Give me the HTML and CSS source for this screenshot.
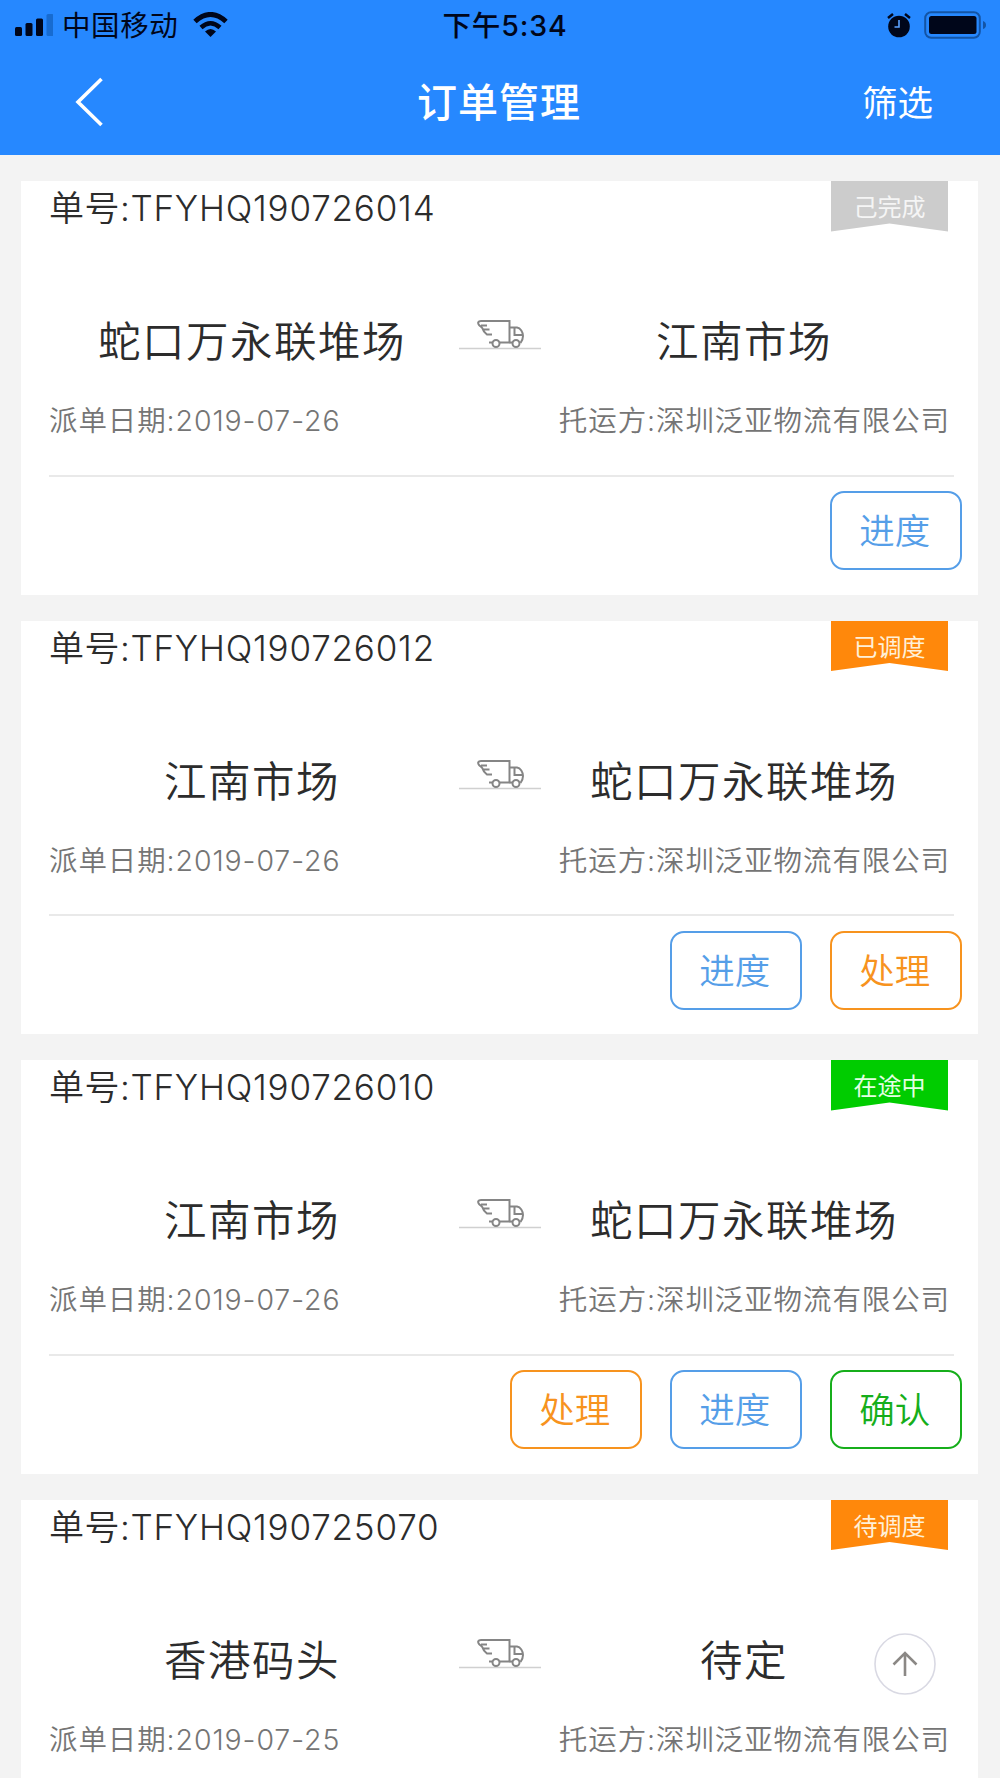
FILE: index.html
```html
<!DOCTYPE html>
<html lang="zh-CN">
<head>
<meta charset="utf-8">
<title>订单管理</title>
<link rel="stylesheet" href="styles.css">
</head>
<body>
<svg class="sprite" width="0" height="0">
  <symbol id="truck" viewBox="0 0 82 34">
    <path d="M0 31.500H82" stroke="#d0d0d0" stroke-width="1.400"/>
    <g fill="none" stroke="#858585" stroke-width="2">
      <path d="M41 25.500H50.500V4H22C19 4 18.500 6 20 8C22 10 23.500 10.500 24 12.500C24.500 15 26 16 28 17.500H33M33 25.500H30M22 8.500H28M24 12.500H30.500"/>
      <path d="M50.500 10.500H58C61.500 11 64 15 64 19C64 22 63 24 61.500 26M53.500 25.500H50.500M55.500 11V18H63"/>
      <circle cx="37" cy="26.500" r="3.500"/><circle cx="57" cy="26.500" r="3.500"/>
    </g>
  </symbol>
</svg>
<header class="header">
  <div class="status">
    <svg class="signal" width="38" height="24" viewBox="0 0 38 24"><rect y="14" width="7" height="9" rx="1.500"/><rect x="10.500" y="10" width="7" height="13" rx="1.500"/><rect x="21" y="5.500" width="7" height="17.500" rx="1.500"/><rect x="31.500" y="1" width="7" height="22" rx="1.500" fill="#176bd0"/></svg>
    <span class="carrier">中国移动</span>
    <svg class="wifi" width="36" height="26" viewBox="0 0 36 26" fill="none" stroke="#00061a"><path d="M2 9.500Q17.500-4.500 33 9.500" stroke-width="5"/><path d="M8 15.500Q17.500 7 27 15.500" stroke-width="4.500"/><path d="M12 19.500Q17.500 14.500 23 19.500L17.500 25Z" fill="#00061a" stroke="none"/></svg>
    <span class="time">下午5:34</span>
    <svg class="alarm" width="24" height="25" viewBox="0 0 24 25"><circle cx="12" cy="13.500" r="10.800"/><path d="M1 5L6 1M23 5L18 1" stroke="#00061a" stroke-width="2.500"/><path d="M12 7V14H7.500" fill="none" stroke="#5ba2ff" stroke-width="1.600"/></svg>
    <svg class="battery" width="64" height="28" viewBox="0 0 64 28"><rect x="1.200" y="1.200" width="54.600" height="25.600" rx="6" fill="none" stroke="#1354a5" stroke-width="2"/><rect x="5" y="5" width="47.500" height="18" rx="2.500"/><path d="M59 10Q62 11 62 14T59 18Z" fill="#1354a5"/></svg>
  </div>
  <nav class="nav">
    <svg class="back" width="30" height="50" viewBox="0 0 30 50"><path d="M26.500 2L3 25L26.500 48" fill="none" stroke="#fff" stroke-width="3.600"/></svg>
    <h1 class="title">订单管理</h1>
    <span class="filter">筛选</span>
  </nav>
</header>
<main class="orders">
  <article class="card">
    <div class="top"><span class="number">单号:<span class="code">TFYHQ190726014</span></span><span class="badge done">己完成</span></div>
    <div class="route"><span>蛇口万永联堆场</span><svg class="truck"><use href="#truck"/></svg><span>江南市场</span></div>
    <div class="meta"><span>派单日期:2019-07-26</span><span>托运方:深圳泛亚物流有限公司</span></div>
    <div class="actions"><span class="btn blue">进度</span></div>
  </article>
  <article class="card">
    <div class="top"><span class="number">单号:<span class="code">TFYHQ190726012</span></span><span class="badge orange-bg">已调度</span></div>
    <div class="route"><span>江南市场</span><svg class="truck"><use href="#truck"/></svg><span>蛇口万永联堆场</span></div>
    <div class="meta"><span>派单日期:2019-07-26</span><span>托运方:深圳泛亚物流有限公司</span></div>
    <div class="actions"><span class="btn blue">进度</span><span class="btn orange">处理</span></div>
  </article>
  <article class="card">
    <div class="top"><span class="number">单号:<span class="code">TFYHQ190726010</span></span><span class="badge green-bg">在途中</span></div>
    <div class="route"><span>江南市场</span><svg class="truck"><use href="#truck"/></svg><span>蛇口万永联堆场</span></div>
    <div class="meta"><span>派单日期:2019-07-26</span><span>托运方:深圳泛亚物流有限公司</span></div>
    <div class="actions"><span class="btn orange">处理</span><span class="btn blue">进度</span><span class="btn green">确认</span></div>
  </article>
  <article class="card">
    <div class="top"><span class="number">单号:<span class="code">TFYHQ190725070</span></span><span class="badge orange-bg">待调度</span></div>
    <div class="route"><span>香港码头</span><svg class="truck"><use href="#truck"/></svg><span>待定</span></div>
    <div class="meta"><span>派单日期:2019-07-25</span><span>托运方:深圳泛亚物流有限公司</span></div>
  </article>
</main>
<svg class="to-top" viewBox="0 0 62 62"><circle cx="31" cy="31" r="30" fill="#fff" stroke="#d9d9e3" stroke-width="1.600"/><path d="M31 43V20M19.500 31.500L31 20L42.500 31.500" fill="none" stroke="#8b8885" stroke-width="2.600"/></svg>
</body>
</html>
```
FILE: styles.css
```css
* { box-sizing: border-box; }
body {
  margin: 0;
  width: 1000px;
  background: #f3f3f3;
  color: #2c2c2c;
  font-family: Inter, "Noto Sans CJK SC", sans-serif;
  font-weight: 350;
  white-space: nowrap;
}
.sprite { position: absolute; }
.header { height: 155px; background: #2688ff; }
.status {
  display: flex;
  align-items: center;
  height: 50px;
  padding: 0 12px 0 15px;
  color: #00061a;
  fill: #00061a;
  font-size: 28.500px;
}
.carrier, .time { line-height: 40px; padding-top: 2px; }
.carrier { margin-left: 9px; letter-spacing: 0.6px; font-weight: 400; }
.wifi { margin-left: 15px; }
.time { margin-left: 213px; font-weight: 500; letter-spacing: 0.9px; }
.alarm { margin-left: auto; }
.battery { margin-left: 13px; }
.nav {
  display: grid;
  grid-template-columns: 1fr 200px 1fr;
  align-items: center;
  height: 104px;
  padding: 0 67px 0 75px;
  color: #fff;
}
.title {
  margin: 0;
  padding: 0 10px 4px 0;
  font-size: 40px;
  font-weight: 500;
  letter-spacing: 1px;
  text-align: center;
}
.filter { justify-self: end; padding-bottom: 4px; font-size: 35.500px; font-weight: 400; }
.orders {
  height: 1623px;
  overflow: hidden;
  padding: 26px 22px 0 21px;
}
.card {
  display: flex;
  flex-direction: column;
  height: 413.500px;
  margin-bottom: 26px;
  padding: 0 16px 0 28px;
  background: #fff;
}
.card:last-child { height: 297px; margin-bottom: 0; }
.top { display: flex; justify-content: space-between; height: 121px; padding-right: 14px; }
.number { font-size: 35px; line-height: 55px; letter-spacing: 0.5px; }
.code { letter-spacing: 0.8px; }
.badge {
  width: 117px;
  height: 50.500px;
  line-height: 53px;
  text-align: center;
  font-size: 24px;
  font-weight: 400;
  color: #fff;
  clip-path: polygon(0 0, 100% 0, 100% 100%, 50% 84%, 0 100%);
}
.done { background: #ccc; color: #f5f5f5; }
.orange-bg { background: #ff880b; color: #fff0d8; }
.green-bg { background: #0c0; color: #e3ffe3; }
.route {
  display: grid;
  grid-template-columns: 406px 90px 398px;
  justify-items: center;
  height: 80px;
  line-height: 79px;
  font-size: 42.500px;
  letter-spacing: 1.500px;
}
.truck { width: 82px; height: 34px; margin-top: 15px; }
.meta {
  display: flex;
  justify-content: space-between;
  height: 94.500px;
  margin-right: 8px;
  padding-right: 4px;
  line-height: 77px;
  font-size: 28.500px;
  letter-spacing: 0.9px;
  color: #757575;
  border-bottom: 2px solid #e9e9e9;
}
.actions { display: flex; justify-content: flex-end; gap: 27.500px; padding-top: 14.500px; }
.btn {
  width: 132.500px;
  height: 79px;
  padding-right: 2px;
  border: 2px solid currentColor;
  border-radius: 14px;
  line-height: 77px;
  text-align: center;
  font-size: 35.500px;
}
.blue { color: #559ee8; }
.orange { color: #f7931e; }
.green { color: #16ae1b; }
.to-top { position: fixed; right: 64px; bottom: 83px; width: 62px; height: 62px; }
```
